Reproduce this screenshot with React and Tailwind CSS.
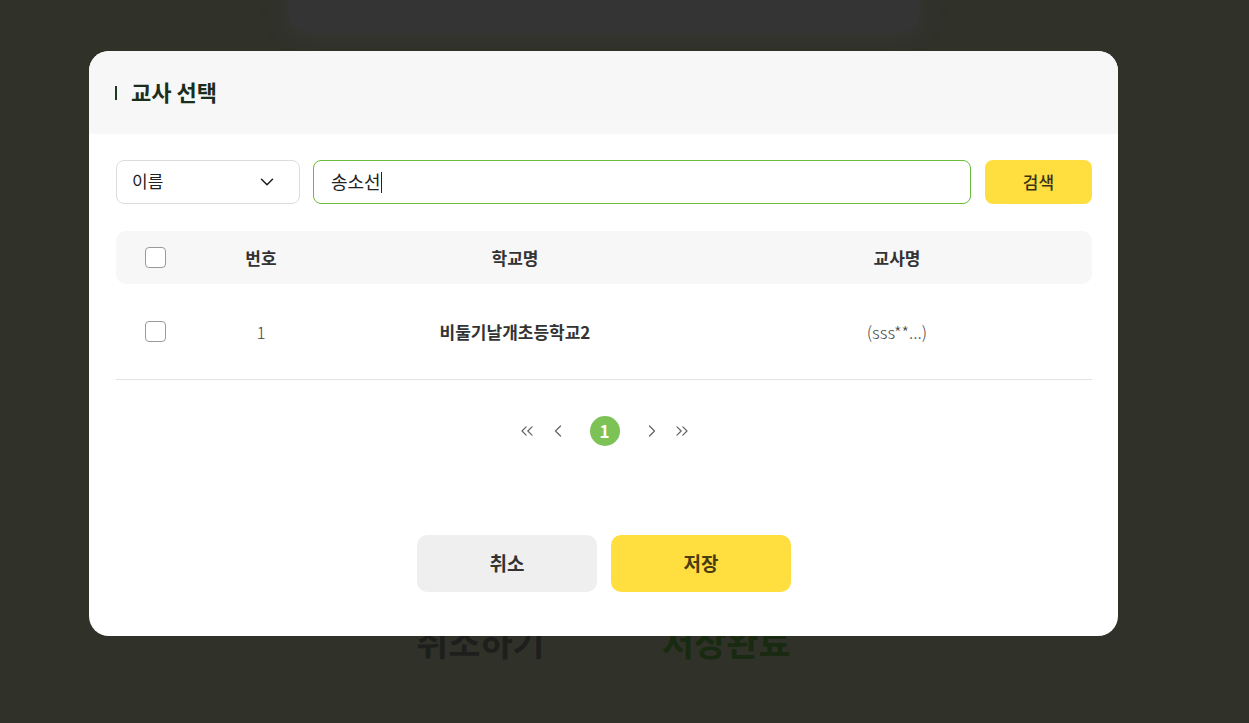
import { ChevronDown, ChevronLeft, ChevronRight, ChevronsLeft, ChevronsRight } from 'lucide-react';

const FONT = "font-['Noto_Sans_CJK_KR','Noto_Sans',sans-serif]";

const ROWS = [{ no: 1, school: '비둘기날개초등학교2', teacher: '(sss**...)' }];

function Checkbox() {
  return <span className="block w-[21px] h-[21px] rounded-[4px] border border-[#9a9a9a] bg-white" />;
}

function TeacherTable() {
  return (
    <div className="mt-[27px]">
      <div className="grid grid-cols-[78px_134px_374px_1fr] h-[53px] items-center rounded-[10px] bg-[#f7f7f7] text-[17px] font-semibold text-[#333]">
        <div className="flex justify-center pl-[1px]">
          <Checkbox />
        </div>
        <div className="text-center">번호</div>
        <div className="text-center">학교명</div>
        <div className="text-center">교사명</div>
      </div>
      {ROWS.map((r) => (
        <div
          key={r.no}
          className="grid grid-cols-[78px_134px_374px_1fr] h-[96px] items-center border-b border-[#e3e3e3] text-[#444]"
        >
          <div className="flex justify-center pl-[1px]">
            <Checkbox />
          </div>
          <div className="text-center text-[17px] font-light">{r.no}</div>
          <div className="text-center text-[17px] font-semibold text-[#333]">{r.school}</div>
          <div className="text-center text-[17px] font-light">{r.teacher}</div>
        </div>
      ))}
    </div>
  );
}

function Pagination() {
  return (
    <div className="mt-[36px] flex items-center justify-center text-[#666]">
      <ChevronsLeft size={20} strokeWidth={1.5} className="mr-[11px]" />
      <ChevronLeft size={20} strokeWidth={1.5} className="mr-[22px]" />
      <span className="flex w-[30px] h-[30px] items-center justify-center rounded-full bg-[#7cc257] text-white text-[17px] font-bold">
        1
      </span>
      <ChevronRight size={20} strokeWidth={1.5} className="ml-[22px]" />
      <ChevronsRight size={20} strokeWidth={1.5} className="ml-[10px]" />
    </div>
  );
}

function TeacherModal() {
  return (
    <div className="absolute left-[89px] top-[51px] w-[1029px] h-[585px] overflow-hidden rounded-[20px] bg-white flex flex-col">
      <div className="h-[83px] shrink-0 bg-[#f7f7f7] flex items-center pl-[26px] pb-[2px]">
        <span className="w-[2px] h-[14px] bg-[#1d3a1f] mr-[14px] mt-[2px]" />
        <h2 className="text-[22px] font-bold text-[#1b2e1b]">교사 선택</h2>
      </div>

      <div className="flex flex-col flex-1 px-[27px] pr-[26px] pt-[26px]">
        {/* search row */}
        <div className="flex items-center gap-[13px]">
          <button className="flex items-center justify-between w-[184px] h-[44px] rounded-[8px] border border-[#dcdcdc] bg-white pl-[15px] pr-[21px] text-[17px] text-[#222]">
            <span className="-mt-[3px]">이름</span>
            <ChevronDown size={22} strokeWidth={1.7} className="text-[#222]" />
          </button>
          <div className="flex items-center flex-1 h-[44px] rounded-[8px] border border-[#6cbb3c] bg-white pl-[17px] text-[18px] text-[#222]">
            <span className="-mt-[2px]">송소선</span>
            <span className="w-[1px] h-[21px] bg-[#222]" />
          </div>
          <button className="w-[107px] h-[44px] ml-[1px] rounded-[8px] bg-[#ffdf3f] text-[17px] font-medium text-[#3a3218]">
            검색
          </button>
        </div>

        <TeacherTable />
        <Pagination />

        <div className="mt-auto mb-[44px] flex justify-center gap-[14px]">
          <button className="w-[180px] h-[57px] rounded-[10px] bg-[#efefef] text-[19px] font-bold text-[#333]">
            취소
          </button>
          <button className="w-[180px] h-[57px] rounded-[10px] bg-[#ffdf3f] text-[19px] font-bold text-[#4a3c10]">
            저장
          </button>
        </div>
      </div>
    </div>
  );
}

export default function App() {
  return (
    <div className={`relative w-[1249px] h-[723px] overflow-hidden bg-[#30322a] ${FONT}`}>
      {/* dimmed page behind the dialog */}
      <div className="ml-[288px] w-[632px] h-[33px] rounded-b-[20px] bg-[#343434] shadow-[0_0_24px_rgba(70,70,70,0.35)]" />
      <div className="mt-[584px] flex pl-[416px] gap-[117px] text-[35px] font-bold leading-[48px]">
        <span className="text-[#1e1f1c]">취소하기</span>
        <span className="text-[#182a0f]">저장완료</span>
      </div>

      <TeacherModal />
    </div>
  );
}
